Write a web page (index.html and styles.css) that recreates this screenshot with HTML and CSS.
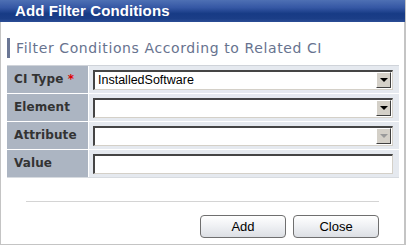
FILE: index.html
```html
<!DOCTYPE html>
<html>
<head>
<meta charset="utf-8">
<link rel="stylesheet" href="styles.css">
</head>
<body>
<div class="dialog">
  <div class="titlebar">Add Filter Conditions</div>
  <div class="content">
    <h2 class="section">Filter Conditions According to Related CI</h2>
    <div class="form">
      <div class="row">
        <div class="label">CI Type <span class="req">*</span></div>
        <div class="cell">
          <div class="select"><span class="val">InstalledSoftware</span><span class="btn"><span class="tri"></span></span></div>
        </div>
      </div>
      <div class="row">
        <div class="label">Element</div>
        <div class="cell">
          <div class="select"><span class="val"></span><span class="btn"><span class="tri"></span></span></div>
        </div>
      </div>
      <div class="row">
        <div class="label">Attribute</div>
        <div class="cell">
          <div class="select"><span class="val"></span><span class="btn"><span class="tri disabled"></span></span></div>
        </div>
      </div>
      <div class="row">
        <div class="label">Value</div>
        <div class="cell">
          <div class="input"></div>
        </div>
      </div>
    </div>
    <div class="sep"></div>
    <div class="buttons">
      <button class="button">Add</button>
      <button class="button">Close</button>
    </div>
  </div>
</div>
</body>
</html>
```
FILE: styles.css
```css
html, body {
  margin: 0;
  padding: 0;
  background: #ffffff;
}
.dialog {
  width: 406px;
  height: 245px;
  box-sizing: border-box;
  border-left: 1px solid #c4c4c4;
  border-right: 2px solid #c4c4c4;
  border-bottom: 1px solid #c4c4c4;
  font-family: "DejaVu Sans", sans-serif;
  display: flex;
  flex-direction: column;
}
.titlebar {
  height: 22px;
  box-sizing: border-box;
  margin-left: -1px;
  margin-right: -1px;
  padding-left: 15px;
  background: linear-gradient(to bottom, #4e70b4 0%, #3557a4 35%, #173b85 62%, #1b3e87 85%, #2c4e96 100%);
  color: #ffffff;
  font-family: "Liberation Sans", Arial, sans-serif;
  font-weight: bold;
  font-size: 15px;
  line-height: 22px;
  letter-spacing: 0.1px;
}
.content {
  padding: 16px 6px 0 6px;
  flex: 1;
  display: flex;
  flex-direction: column;
}
.section {
  margin: 0;
  height: 20px;
  border-left: 3px solid #6b7795;
  padding-left: 6px;
  font-size: 14px;
  font-weight: normal;
  color: #67738f;
  line-height: 20px;
  letter-spacing: 0.6px;
}
.form {
  margin-top: 7px;
  width: 392px;
  border-top: 1px solid #cfd3d9;
  border-bottom: 1px solid #d7dbe0;
  display: flex;
  flex-direction: column;
}
.row {
  display: flex;
  height: 27px;
  border-bottom: 1px solid #ffffff;
}
.row:last-child {
  border-bottom: none;
}
.label {
  width: 82px;
  background: #acb5c2;
  border-right: 1px solid #ffffff;
  padding-left: 7px;
  box-sizing: border-box;
  font-size: 12px;
  font-weight: bold;
  color: #333333;
  line-height: 27px;
  white-space: nowrap;
  letter-spacing: 0.1px;
}
.req {
  color: #e00000;
}
.cell {
  flex: 1;
  background: #e5e9ef;
  padding: 4px 6px 0 4px;
}
.select, .input {
  height: 20px;
  box-sizing: border-box;
  border-top: 2px solid #454545;
  border-left: 2px solid #454545;
  border-right: 1px solid #d4d0c8;
  border-bottom: 1px solid #d4d0c8;
  background: #ffffff;
  display: flex;
  align-items: stretch;
}
.val {
  flex: 1;
  font-family: "Liberation Sans", Arial, sans-serif;
  font-size: 12.5px;
  line-height: 17px;
  padding-left: 3px;
  color: #000000;
}
.btn {
  width: 15px;
  margin: 0 1px 1px 0;
  box-sizing: border-box;
  background: #d4d0c8;
  border-top: 1px solid #ffffff;
  border-left: 1px solid #ffffff;
  border-right: 1px solid #404040;
  border-bottom: 1px solid #404040;
  display: flex;
  align-items: center;
  justify-content: center;
}
.tri {
  width: 0;
  height: 0;
  border-left: 4px solid transparent;
  border-right: 4px solid transparent;
  border-top: 4px solid #000000;
}
.tri.disabled {
  border-top-color: #9a9a9a;
}
.sep {
  margin: 23px 19px 0 19px;
  height: 1px;
  background: #d4d4d4;
}
.buttons {
  display: flex;
  justify-content: flex-end;
  gap: 7px;
  margin-top: 13px;
  padding-right: 19px;
}
.button {
  width: 86px;
  height: 23px;
  border: 1px solid #6f6f6f;
  border-radius: 4px;
  background: linear-gradient(to bottom, #ffffff 0%, #eef0f3 50%, #dcdfe4 100%);
  font-family: "Liberation Sans", Arial, sans-serif;
  font-size: 13px;
  color: #000000;
  padding: 0;
}
```
